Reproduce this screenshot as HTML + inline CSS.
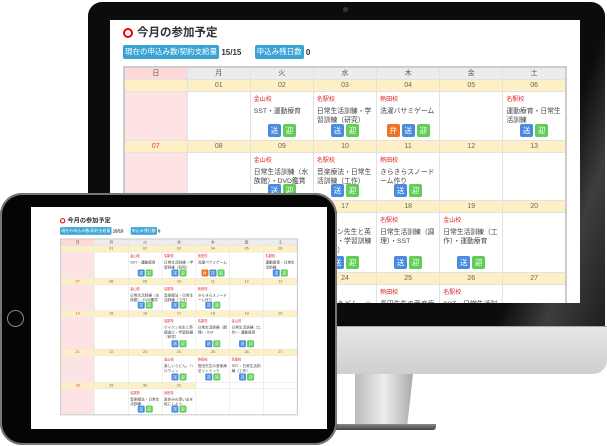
<!DOCTYPE html>
<html><head><meta charset="utf-8"><style>
*{margin:0;padding:0;box-sizing:border-box}
body{width:607px;height:446px;background:#fff;position:relative;overflow:hidden;font-family:"Liberation Sans","Noto Sans CJK JP",sans-serif}
.abs{position:absolute}
.cal{position:absolute;width:444px;transform-origin:0 0;color:#333}
.cal .t{font-size:11.5px;font-weight:bold;height:14px;line-height:14px;display:flex;align-items:center}
.cal .t i{display:inline-block;width:10px;height:10px;border:2px solid #e00;border-radius:50%;margin-right:4px}
.cal .b{margin-top:5px;height:14px;display:flex;align-items:center;font-size:8px;font-weight:bold}
.cal .b span.p{background:#3aa3d6;color:#fff;font-weight:normal;padding:0 2px;height:14px;line-height:14px;border-radius:2px;font-size:7.5px}
.cal table{margin-top:7px;border-collapse:collapse;width:444px;table-layout:fixed;border:2px solid #ccc}
.cal td{border:1px solid #e2e2e2;font-size:7px;vertical-align:top;padding:0;overflow:hidden}
.cal tr.h td{background:#ececec;height:12px;text-align:center;line-height:11px;color:#555}
.cal tr.h td:first-child{background:#fdd9d9}
.cal tr.d td{background:#fdf0c4;height:12px;text-align:center;line-height:11px;color:#666}
.cal tr.d td:first-child{color:#e33}
.cal tr.c td:first-child{background:#fde3e3}
.cal tr.d td.e,.cal tr.c td.e{background:#fff}
.cal .w{position:relative;overflow:hidden;padding:0 3px}
.cal .s{color:#d22;font-size:6px;margin-top:4px;line-height:9px}
.cal .x{line-height:9px;margin-top:2px;color:#444;font-size:6.8px}
.cal .bt{position:absolute;left:0;right:0;bottom:3px;text-align:center;font-size:0}
.cal .bt u{text-decoration:none;display:inline-block;width:13px;height:13px;line-height:13px;color:#fff;font-size:7.5px;border-radius:2px;margin:0 1px}
.o{background:#4a8be0}.g{background:#5fcd56}.r{background:#ef7424}
</style></head><body>

<div class="abs" style="left:88px;top:2px;width:517px;height:324px;background:#0c0c0c;border-radius:14px 14px 0 0"></div>
<div class="abs" style="left:480px;top:2px;width:125px;height:324px;background:linear-gradient(110deg,rgba(0,0,0,0) 55%,rgba(110,110,110,.5) 75%,rgba(60,60,60,.4));border-radius:0 14px 0 0"></div>
<div class="abs" style="left:343px;top:7px;width:5px;height:5px;border-radius:50%;background:#334"></div>
<div class="abs" style="left:88px;top:326px;width:519px;height:48px;background:linear-gradient(#e6e6e6,#cfcfcf);border-radius:0 0 14px 0;border-top:1px solid #aaa"></div>
<div class="abs" style="left:355px;top:374px;width:58px;height:52px;background:linear-gradient(90deg,#bbb,#eee 50%,#aaa);clip-path:polygon(0 0,100% 0,90% 100%,0 100%)"></div>
<div class="abs" style="left:330px;top:424px;width:106px;height:6px;background:linear-gradient(#888,#444);border-radius:0 0 3px 3px"></div>

<div class="abs" style="left:110px;top:20px;width:470px;height:283px;background:#fff;overflow:hidden">
 <div class="cal" id="c1" style="left:13px;top:6px"></div>
</div>

<div class="abs" style="left:0;top:193px;width:337px;height:252px;background:#050505;border-radius:22px;box-shadow:inset 0 0 0 2px #777"></div>
<div class="abs" style="left:7px;top:310px;width:17px;height:17px;border-radius:50%;border:1px solid #888"></div>
<div class="abs" style="left:31px;top:207px;width:296px;height:222px;background:#fff;overflow:hidden">
 <div class="cal" id="c2" style="left:29px;top:10px;transform:scale(.536)"></div>
</div>

<script>
var B={o:'<u class="o">送</u>',g:'<u class="g">迎</u>',r:'<u class="r">弁</u>'};
function ev(s,x,b){return '<div class="s">'+s+'</div><div class="x">'+x+'</div><div class="bt">'+(b||'')+B.o+B.g+'</div>';}
var W=[
 {d:['','01','02','03','04','05','06'],h:48,c:['','',ev('金山校','SST・運動療育'),ev('名駅校','日常生活訓練・学習訓練（研究）'),ev('熱田校','洗濯バサミゲーム',B.r),'',ev('名駅校','運動療育・日常生活訓練')]},
 {d:['07','08','09','10','11','12','13'],h:47,c:['','',ev('金山校','日常生活訓練（水族館）・DVD鑑賞'),ev('名駅校','音楽療法・日常生活訓練（工作）'),ev('熱田校','きらきらスノードーム作り'),'','']},
 {d:['14','15','16','17','18','19','20'],h:59,c:['','','',ev('名駅校','ケイケン先生と英語遊び・学習訓練（研究）'),ev('名駅校','日常生活訓練（調理）・SST'),ev('金山校','日常生活訓練（工作）・運動療育'),'']},
 {d:['21','22','23','24','25','26','27'],h:49,c:['','','',ev('金山校','楽しいうどん。ハロウィン'),ev('熱田校','長田先生の音楽療法リトミック'),ev('名駅校','SST・日常生活訓練（工作）'),'']},
 {d:['28','29','30','31','','',''],h:47,c:['','',ev('名駅校','音楽療法・日常生活訓練'),ev('熱田校','夏休みの思い出を絵にしよう'),'','','']}
];
var h='<div class="t"><i></i>今月の参加予定</div><div class="b"><span class="p">現在の申込み数/契約支給量</span>&nbsp;15/15&nbsp;&nbsp;&nbsp;&nbsp;&nbsp;&nbsp;<span class="p">申込み残日数</span>&nbsp;0</div><table><tr class="h">';
['日','月','火','水','木','金','土'].forEach(function(x){h+='<td>'+x+'</td>'});h+='</tr>';
W.forEach(function(w,wi){h+='<tr class="d">';w.d.forEach(function(x,i){h+='<td'+(wi==4&&i>3?' class="e"':'')+'>'+x+'</td>'});h+='</tr><tr class="c">';
w.c.forEach(function(x,i){h+='<td'+(wi==4&&i>3?' class="e"':'')+'><div class="w" style="height:'+w.h+'px">'+x+'</div></td>'});h+='</tr>';});
h+='</table>';
document.getElementById('c1').innerHTML=h;document.getElementById('c2').innerHTML=h;
</script>
</body></html>
